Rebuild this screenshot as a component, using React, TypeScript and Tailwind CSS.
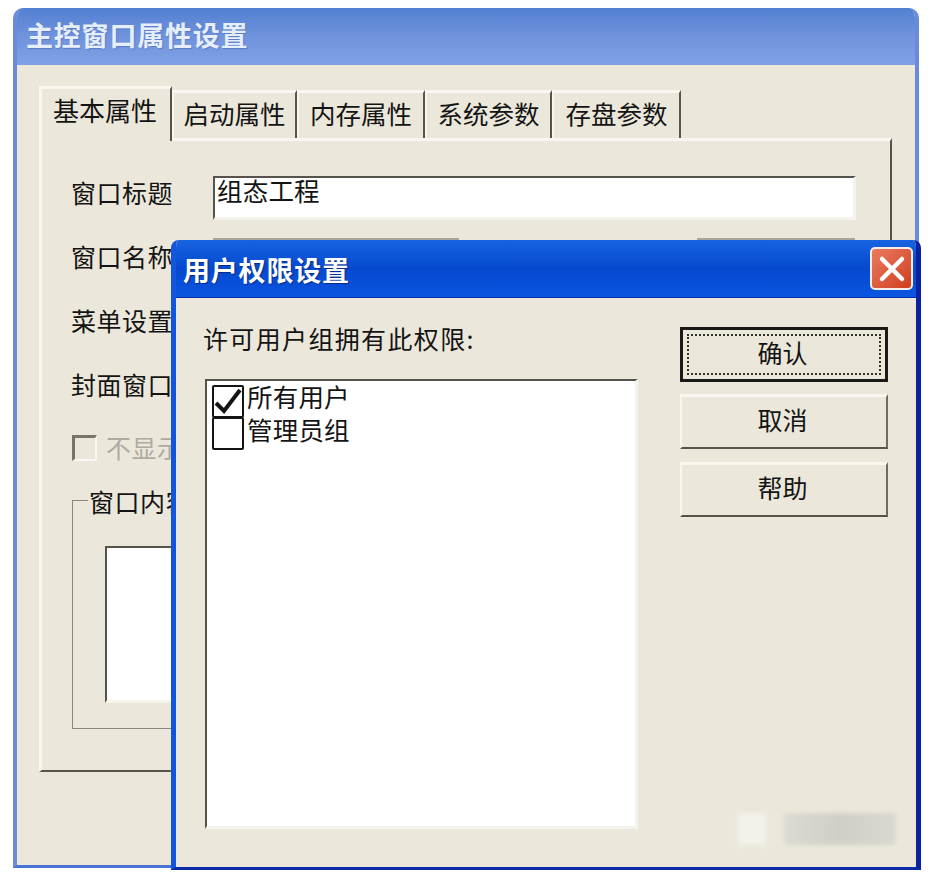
import React from "react";

const tabs = [
  { t: "启动属性", w: "w-[125px]" },
  { t: "内存属性", w: "w-[128px]" },
  { t: "系统参数", w: "w-[127px]" },
  { t: "存盘参数", w: "w-[129px]" },
];

function Field({ label, children, cls, lead }: { label: string; children?: React.ReactNode; cls: string; lead: string }) {
  return (
    <div className={`flex h-[44px] ${cls}`}>
      <div className={`w-[141px] -ml-[1px] mr-[1px] text-[25px] ${lead} tracking-[0.5px] text-[#141414] whitespace-nowrap`}>{label}</div>
      {children}
    </div>
  );
}

function Btn({ label }: { label: string }) {
  return (
    <div className="flex h-[55px] w-[208px] items-center justify-center border-2 border-t-[3px] border-l-[#f8f7f0] border-t-[#f8f7f0] border-r-[#6e6b60] border-b-[#55534a] bg-[#ebe8db] pb-[4px] pr-[3px] text-[25px] text-[#141414]">
      {label}
    </div>
  );
}

export default function App() {
  return (
    <div className="relative h-[882px] w-[934px] overflow-hidden bg-white font-['Noto_Sans_CJK_SC','Noto_Sans',sans-serif]">
      {/* main window */}
      <div className="absolute left-[13px] top-[8px] flex h-[860px] w-[906px] flex-col overflow-hidden rounded-t-[10px] border-x-4 border-b-[3px] border-x-[#6a8bdc] border-b-[#4a72d8] bg-[#ebe8db]">
        <div className="-mx-1 flex h-[57px] shrink-0 items-center bg-gradient-to-b from-[#5280d2] via-[#7093dc] to-[#7ea1e6] pb-[3px] pl-[13px] text-[27px] font-bold tracking-[0.8px] text-[#e6eefa] [text-shadow:1px_1px_1px_#5a7cc8]">
          主控窗口属性设置
        </div>
        <div className="flex flex-col pl-[22px] pt-[21px]">
          <div className="flex h-[52px] items-end">
            <div className="relative z-10 -mb-[3px] flex h-[55px] w-[133px] justify-center border-l-[3px] border-t-[3px] border-r-2 border-l-[#f8f7f0] border-t-[#f8f7f0] border-r-[#55534a] bg-[#ebe8db] pr-[2px] text-[26px] leading-[42px] text-[#141414]">
              基本属性
            </div>
            {tabs.map((x) => (
              <div key={x.t} className={`flex h-[48px] ${x.w} justify-center border-l-2 border-t-[3px] border-r-2 border-l-[#f8f7f0] border-t-[#f8f7f0] border-r-[#55534a] bg-[#ebe8db] text-[25.5px] leading-[40px] text-[#141414]`}>
                {x.t}
              </div>
            ))}
          </div>
          <div className="flex h-[634px] w-[853px] flex-col border-b-2 border-l-[3px] border-r-2 border-t-[3px] border-b-[#55534a] border-l-[#f8f7f0] border-r-[#55534a] border-t-[#f8f7f0] pl-[30px] pt-[35px]">
            <Field label="窗口标题" lead="leading-[32px]" cls="mb-[18px]">
              <div className="h-[44px] w-[643px] border-l-2 border-t-2 border-b-[3px] border-r-[3px] border-l-[#55534a] border-t-[#55534a] border-b-[#f4f3ec] border-r-[#f4f3ec] bg-white pl-[2px] text-[25.5px] leading-[24px] tracking-[0.2px] text-[#141414]">
                组态工程
              </div>
            </Field>
            <Field label="窗口名称" lead="leading-[36px]" cls="mb-[20px]">
              <div className="h-[44px] w-[246px] border-t-2 border-t-[#a8a69c] bg-white" />
              <div className="ml-[238px] h-[44px] w-[158px] border-t-2 border-t-[#a8a69c] bg-white" />
            </Field>
            <Field label="菜单设置" lead="leading-[36px]" cls="mb-[20px]" />
            <Field label="封面窗口" lead="leading-[36px]" cls="mb-[25px]" />
            <div className="flex h-[26px] items-center">
              <div className="h-[26px] w-[25px] border-2 border-l-[3px] border-t-[3px] border-l-[#77756a] border-t-[#77756a] border-b-[#f8f7f0] border-r-[#f8f7f0]" />
              <span className="ml-[9px] text-[25px] tracking-[0.5px] text-[#aeaca2]">不显示封面</span>
            </div>
            <div className="relative mt-[39px] h-[229px] w-[700px] border border-[#8b897e]">
              <span className="absolute -top-[18px] left-[15px] bg-[#ebe8db] px-[1px] text-[25px] leading-[36px] tracking-[0.5px] text-[#141414]">窗口内容</span>
              <div className="ml-[32px] mt-[45px] h-[157px] w-[600px] border-l-2 border-t-2 border-b-[3px] border-l-[#55534a] border-t-[#55534a] border-b-[#f4f3ec] bg-white" />
            </div>
          </div>
        </div>
      </div>

      {/* dialog */}
      <div className="absolute left-[171px] top-[240px] flex h-[630px] w-[750px] flex-col overflow-hidden rounded-t-[8px] border-b-[3px] border-l-[5px] border-r-[5px] border-b-[#0b2aa8] border-l-[#1255dc] border-r-[#0a22a0] bg-[#ebe8db]">
        <div className="-mx-[5px] flex h-[57px] shrink-0 items-center justify-between bg-gradient-to-b from-[#1763e0] via-[#0649d0] to-[#0a55e0] pl-[12px] pr-[8px]">
          <span className="pt-[4px] text-[27px] font-bold tracking-[0.8px] text-white [text-shadow:1px_1px_1px_#0a2a88]">用户权限设置</span>
          <div className="flex h-[43px] w-[43px] items-center justify-center rounded-[5px] border-2 border-[#f4ece6] bg-gradient-to-br from-[#ea7a5e] to-[#cf3d1c]">
            <svg width="28" height="28" viewBox="0 0 28 28" fill="none">
              <path d="M4 4 L24 24 M24 4 L4 24" stroke="#fff" strokeWidth="4.5" strokeLinecap="round" />
            </svg>
          </div>
        </div>
        <div className="flex flex-1 border-t border-[#0a2aa8]">
          <div className="ml-[27px] flex w-[477px] flex-col pt-[22px]">
            <div className="h-[36px] text-[25px] leading-[36px] tracking-[1.35px] text-[#141414]">许可用户组拥有此权限:</div>
            <div className="ml-[2px] mt-[23px] flex h-[450px] w-[433px] flex-col border-l-2 border-t-2 border-b-[3px] border-r-[3px] border-l-[#55534a] border-t-[#55534a] border-b-[#f4f3ec] border-r-[#f4f3ec] bg-white pl-[5px] pt-[4px]">
              <div className="flex h-[32px] items-start">
                <div className="flex h-[33px] w-[32px] items-center justify-center rounded-[2px] border-2 border-[#141414] bg-white">
                  <svg width="28" height="28" viewBox="0 0 28 28" fill="none">
                    <path d="M2 15 L10 23 L26 2" stroke="#141414" strokeWidth="4" />
                  </svg>
                </div>
                <span className="ml-[3px] text-[25.5px] leading-[22px] tracking-[0.2px] text-[#141414]">所有用户</span>
              </div>
              <div className="flex h-[33px] items-start">
                <div className="h-[33px] w-[32px] rounded-[2px] border-2 border-[#141414] bg-white" />
                <span className="ml-[3px] text-[25.5px] leading-[24px] tracking-[0.2px] text-[#141414]">管理员组</span>
              </div>
            </div>
          </div>
          <div className="flex flex-col pt-[29px]">
            <div className="h-[55px] w-[208px] border-[3px] border-[#1a1a18] bg-[#ebe8db] p-[4px]">
              <div className="flex h-full w-full items-center justify-center border-2 border-dotted border-[#33322c] pb-[4px] pr-[3px] text-[25px] text-[#141414]">
                确认
              </div>
            </div>
            <div className="mt-[12px] flex flex-col gap-[13px]">
              <Btn label="取消" />
              <Btn label="帮助" />
            </div>
          </div>
        </div>
        {/* blurred watermark */}
        <div className="absolute bottom-[22px] right-[20px] flex h-[32px] w-[158px] blur-[2px]">
          <div className="h-full w-[28px] bg-[#f2f1ea]" />
          <div className="ml-[18px] h-full flex-1 bg-gradient-to-r from-[#dcdad2] via-[#d0cec7] to-[#dad8d1]" />
        </div>
      </div>
    </div>
  );
}
